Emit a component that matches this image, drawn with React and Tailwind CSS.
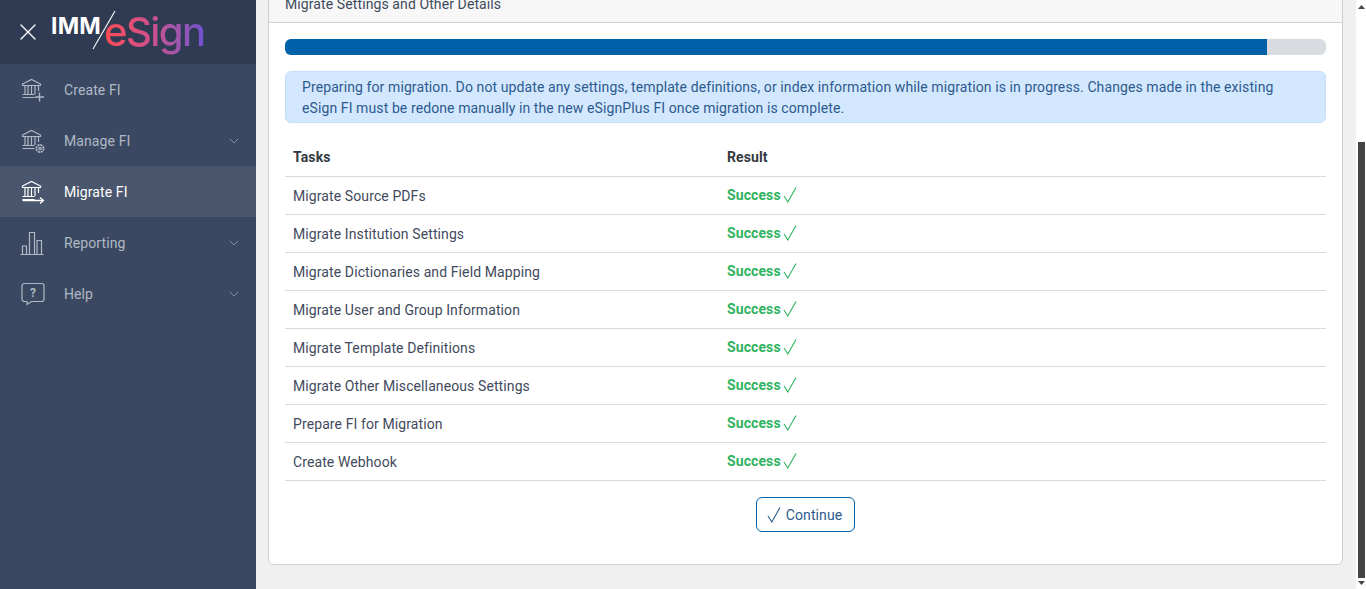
import React from "react";
import { ChevronDown, X } from "lucide-react";

const rows = [
  "Migrate Source PDFs",
  "Migrate Institution Settings",
  "Migrate Dictionaries and Field Mapping",
  "Migrate User and Group Information",
  "Migrate Template Definitions",
  "Migrate Other Miscellaneous Settings",
  "Prepare FI for Migration",
  "Create Webhook",
];

function Bank({ children }) {
  return (
    <svg width="26" height="26" viewBox="0 0 26 26" fill="none" stroke="currentColor" strokeWidth="1.2">
      <path d="M2.500 7 11.500 2.500l9 4.500v1.500h-18z" />
      <path d="M5 9v8M8 9v8M11.500 9v8M15 9v8M18.500 9v5" />
      <path d="M2.500 17.500h12M2.500 20.500h12" />
      {children}
    </svg>
  );
}

const icons = {
  create: (
    <Bank>
      <path d="M19.500 15.500v9M15 20h9" strokeWidth="1.4" />
    </Bank>
  ),
  manage: (
    <Bank>
      <circle cx="20" cy="20.500" r="3.600" strokeWidth="1.800" strokeDasharray="2 0.8" />
      <circle cx="20" cy="20.500" r="1.200" />
    </Bank>
  ),
  migrate: (
    <Bank>
      <path d="M2.500 21.500h21M20 18.500l3.500 3-3.500 3" strokeWidth="1.300" />
    </Bank>
  ),
  reporting: (
    <svg width="26" height="26" viewBox="0 0 26 26" fill="none" stroke="currentColor" strokeWidth="1.200">
      <path d="M.5 24.500h23M2.500 24v-8h4v8M9.500 24V2.500h5V24M17 24V10.500h4.500V24" />
    </svg>
  ),
  help: (
    <svg width="26" height="26" viewBox="0 0 26 26" fill="none" stroke="currentColor" strokeWidth="1.200">
      <path d="M4.500 2.500h17a2.500 2.500 0 0 1 2.500 2.500v13a2.500 2.500 0 0 1-2.500 2.500h-10l-4.500 3v-3h-2.500a2.500 2.500 0 0 1-2.500-2.500V5a2.500 2.500 0 0 1 2.500-2.500z" />
      <text x="13" y="16" textAnchor="middle" fontSize="12" fontWeight="700" fill="currentColor" stroke="none" fontFamily="Roboto, sans-serif">?</text>
    </svg>
  ),
};

function NavItem({ icon, label, active, chevron }) {
  return (
    <div className={`flex h-[51px] items-center pl-5 pr-[14px] ${active ? "bg-[#4a566d] text-white" : "text-[#b0b8c5]"}`}>
      <span className="w-[44px] shrink-0">{icons[icon]}</span>
      <span className="flex-1 text-sm">{label}</span>
      {chevron && <ChevronDown size={16} strokeWidth={1} className="text-[#aab2bf]" />}
    </div>
  );
}

function Check({ className = "" }) {
  return (
    <svg width="14" height="16" viewBox="0 0 14 16" fill="none" stroke="currentColor" strokeWidth="1.100" className={className}>
      <path d="M1 9 4.800 15 13 .5" />
    </svg>
  );
}

function Scrollbar() {
  return (
    <div className="flex w-[10px] shrink-0 flex-col items-center bg-white">
      <svg width="7" height="4" viewBox="0 0 7 4" className="mt-[5px] fill-[#444]">
        <path d="M3.500 0 7 4H0z" />
      </svg>
      <div className="mt-[133px] h-[436px] w-[7px] bg-[#444]" />
      <svg width="7" height="4" viewBox="0 0 7 4" className="mt-[3px] fill-[#444]">
        <path d="M0 0h7L3.500 4z" />
      </svg>
    </div>
  );
}

export default function App() {
  return (
    <div className="flex h-[589px] w-[1366px] overflow-hidden bg-[#f0f0f0] font-['Roboto',sans-serif] text-sm tracking-[0.1px] text-[#3f4a5c]">
      <aside className="flex w-[256px] shrink-0 flex-col bg-[#3a4961]">
        <div className="flex h-[64px] items-center bg-[#2f3b52] pl-[14px]">
          <X size={28} strokeWidth={1.200} className="-mt-px text-white" />
          <div className="ml-[9px] flex h-[50px] w-[170px] items-center">
            <span className="-mt-[11px] font-['Inter',sans-serif] text-[23px] leading-none font-bold tracking-[0.2px] text-white">IMM</span>
            <svg width="24" height="40" viewBox="0 0 24 40" className="-ml-[9px] -mt-[5px] shrink-0" stroke="#fff" strokeWidth="1.100">
              <path d="M23 1 1 39" />
            </svg>
            <span className="-ml-[12px] mt-[8px] bg-gradient-to-r from-[#ff4a4f] via-[#c9508e] to-[#6f50d0] bg-clip-text pb-2 font-['Inter',sans-serif] text-[40px] leading-none font-medium tracking-[-1.5px] text-transparent">eSign</span>
          </div>
        </div>
        <div>
          <NavItem icon="create" label="Create FI" />
          <NavItem icon="manage" label="Manage FI" chevron />
          <NavItem icon="migrate" label="Migrate FI" active />
          <NavItem icon="reporting" label="Reporting" chevron />
          <NavItem icon="help" label="Help" chevron />
        </div>
      </aside>

      <main className="min-w-0 flex-1 overflow-hidden pl-3 pr-[13px]">
        <section className="-mt-[21px] h-[586px] rounded-md border border-[#d0d0d0] bg-white">
          <div className="flex h-[43px] items-end border-b border-[#d0d0d0] bg-[#f7f7f7] px-4 pb-[7px] leading-[21px]">
            Migrate Settings and Other Details
          </div>
          <div className="px-4 pt-4">
            <div className="flex h-4 overflow-hidden rounded-md bg-[#d8dbe0]">
              <div className="h-full w-[982px] bg-[#0060a8]" />
            </div>
            <div className="mt-4 h-[52px] rounded-md border border-[#c5dffb] bg-[#d3e8fe] px-4 py-[5px] leading-[21px] text-[#2d5a8e]">
              Preparing for migration. Do not update any settings, template definitions, or index information while migration is in progress. Changes made in the existing eSign FI must be redone manually in the new eSignPlus FI once migration is complete.
            </div>
            <table className="mt-[15px] w-full border-collapse text-left">
              <thead>
                <tr className="h-[38px] border-b border-[#d8dbe0]">
                  <th className="w-[434px] pl-2 font-bold text-[#343a40]">Tasks</th>
                  <th className="pl-2 font-bold text-[#343a40]">Result</th>
                </tr>
              </thead>
              <tbody>
                {rows.map((row) => (
                  <tr key={row} className="h-[38px] border-b border-[#d8dbe0]">
                    <td className="pl-2 pt-[2px]">{row}</td>
                    <td className="pl-2">
                      <span className="flex items-center font-bold text-[#2fb35f]">
                        Success
                        <Check className="ml-[2px]" />
                      </span>
                    </td>
                  </tr>
                ))}
              </tbody>
            </table>
            <div className="mt-4 flex justify-center">
              <button className="flex h-[35px] w-[99px] items-center justify-center gap-[5px] rounded-md border border-[#0060a8] bg-white pt-px pr-[2px] text-[#2d5a8e]">
                <Check />
                Continue
              </button>
            </div>
          </div>
        </section>
      </main>
      <Scrollbar />
    </div>
  );
}
